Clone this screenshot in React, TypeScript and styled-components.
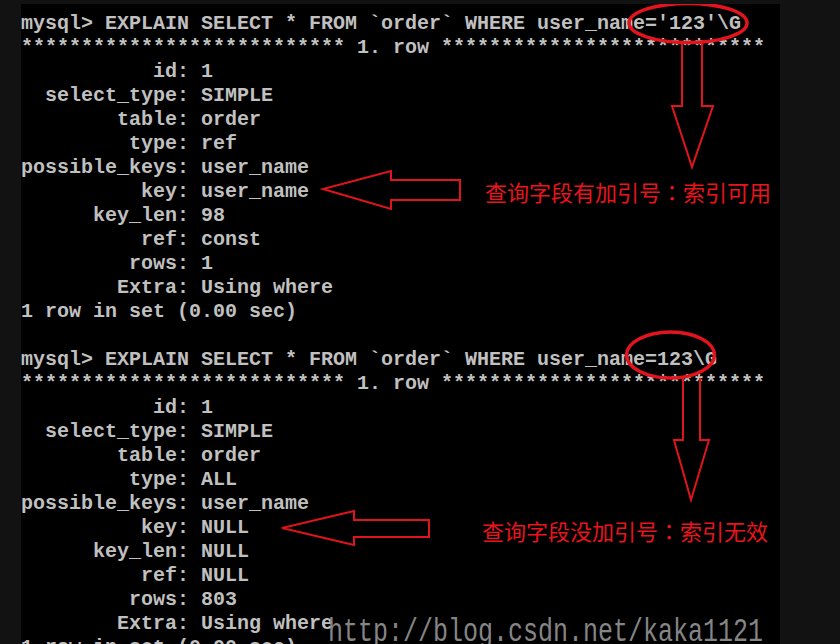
import React from "react";
import styled, { createGlobalStyle } from "styled-components";

const Global = createGlobalStyle`
  html, body {
    margin: 0;
    padding: 0;
    background: #121212;
    overflow: hidden;
  }
`;

const Page = styled.div`
  display: flex;
  align-items: flex-start;
  width: 840px;
  height: 644px;
  padding: 4px 0 0 21px;
  box-sizing: border-box;
  background: #121212;
`;

const Screen = styled.div`
  position: relative;
  width: 759px;
  height: 640px;
  background: #000;
  overflow: hidden;
`;

const Console = styled.pre`
  margin: 0;
  padding: 8px 0 0 0;
  font-family: "Liberation Mono", "DejaVu Sans Mono", monospace;
  font-weight: bold;
  font-size: 20px;
  line-height: 24px;
  color: #c0c0c0;
  white-space: pre;
`;

const Line = styled.div`
  height: 24px;
`;

const Overlay = styled.svg`
  position: absolute;
  left: 0;
  top: 0;
  width: 759px;
  height: 640px;
  pointer-events: none;
`;

const Note = styled.div<{ $x: number; $y: number }>`
  position: absolute;
  left: ${(p) => p.$x - 21}px;
  top: ${(p) => p.$y - 4}px;
  font-family: "Noto Sans CJK SC", "Noto Sans", sans-serif;
  font-size: 22px;
  line-height: 22px;
  color: #ea141d;
  white-space: nowrap;
`;

const Colon = styled.span`
  font-family: "Noto Sans CJK JP", "Noto Sans CJK SC", sans-serif;
`;

const Watermark = styled.div`
  position: absolute;
  left: ${328 - 21}px;
  top: ${616 - 4}px;
  font-family: "Liberation Mono", "DejaVu Sans Mono", monospace;
  font-size: 25px;
  line-height: 25px;
  color: #858585;
  transform: scaleY(1.3);
  transform-origin: top left;
  white-space: nowrap;
`;

type Query = { literal: string; rows: [string, string][] };

const queries: Query[] = [
  {
    literal: "'123'",
    rows: [
      ["id", "1"],
      ["select_type", "SIMPLE"],
      ["table", "order"],
      ["type", "ref"],
      ["possible_keys", "user_name"],
      ["key", "user_name"],
      ["key_len", "98"],
      ["ref", "const"],
      ["rows", "1"],
      ["Extra", "Using where"],
    ],
  },
  {
    literal: "123",
    rows: [
      ["id", "1"],
      ["select_type", "SIMPLE"],
      ["table", "order"],
      ["type", "ALL"],
      ["possible_keys", "user_name"],
      ["key", "NULL"],
      ["key_len", "NULL"],
      ["ref", "NULL"],
      ["rows", "803"],
      ["Extra", "Using where"],
    ],
  },
];

const stars = "*".repeat(27);

function buildLines(): string[] {
  const out: string[] = [];
  queries.forEach((q, i) => {
    if (i > 0) out.push("");
    out.push("mysql> EXPLAIN SELECT * FROM `order` WHERE user_name=" + q.literal + "\\G");
    out.push(`${stars} 1. row ${stars}`);
    q.rows.forEach(([k, v]) => out.push(`${k.padStart(13, " ")}: ${v}`));
    out.push("1 row in set (0.00 sec)");
  });
  return out;
}

const RED = "#e0141c";

export default function App() {
  const lines = buildLines();
  return (
    <>
      <Global />
      <Page>
        <Screen>
          <Console>
            {lines.map((l, i) => (
              <Line key={i}>{l}</Line>
            ))}
          </Console>
          <Overlay viewBox="21 4 759 640">
            <ellipse cx="688" cy="23" rx="59" ry="19.5" fill="none" stroke="#e3141e" strokeWidth="3.5" />
            <path
              d="M682,43 L682,106 L672,106 L692,167 L713,106 L702,106 L702,43"
              fill="none"
              stroke={RED}
              strokeWidth="2"
            />
            <path
              d="M460,180 L391,180 L391,171 L323,189 L391,209 L391,200 L460,200 Z"
              fill="none"
              stroke={RED}
              strokeWidth="2"
            />
            <ellipse cx="670.5" cy="355" rx="44" ry="23" fill="none" stroke="#e3141e" strokeWidth="3.5" />
            <path
              d="M683,378 L683,440 L674,440 L691,500 L709,440 L700,440 L700,378"
              fill="none"
              stroke={RED}
              strokeWidth="2"
            />
            <path
              d="M429,520 L354,520 L354,511 L282,528 L354,545 L354,537 L429,537 Z"
              fill="none"
              stroke={RED}
              strokeWidth="2"
            />
          </Overlay>
          <Note $x={485} $y={180}>
            查询字段有加引号<Colon>：</Colon>索引可用
          </Note>
          <Note $x={482} $y={519}>
            查询字段没加引号<Colon>：</Colon>索引无效
          </Note>
          <Watermark>http://blog.csdn.net/kaka1121</Watermark>
        </Screen>
      </Page>
    </>
  );
}
